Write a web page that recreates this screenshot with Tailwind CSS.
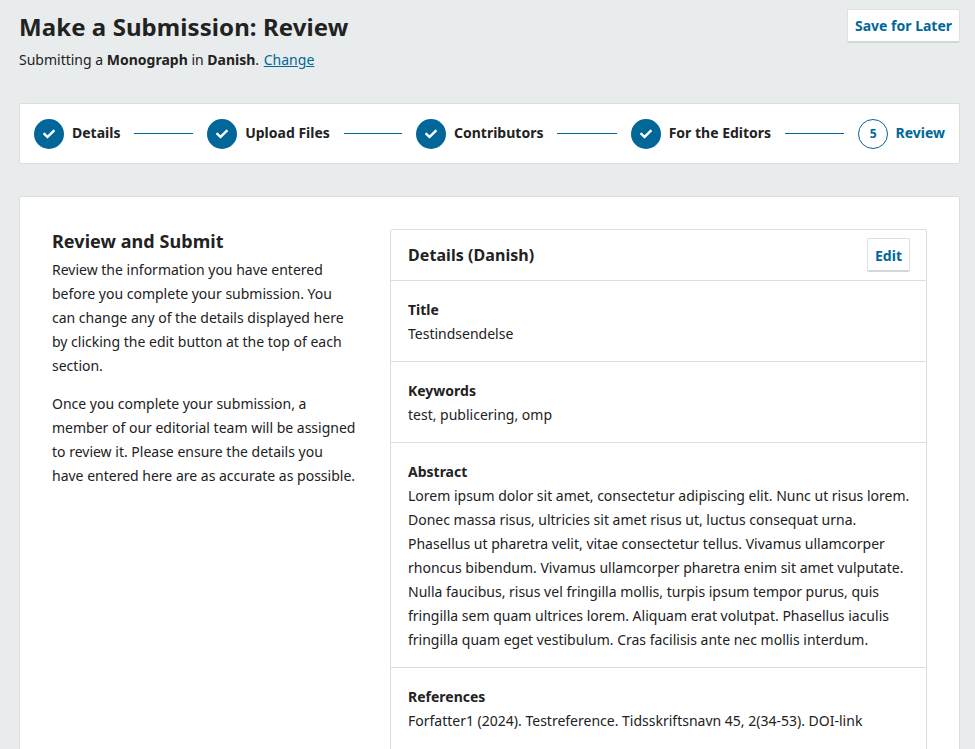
<!DOCTYPE html>
<html lang="en">
<head>
  <meta charset="UTF-8" />
  <title>Make a Submission: Review</title>
  <script src="https://cdn.jsdelivr.net/npm/@tailwindcss/browser@4"></script>
</head>
<body class="h-[749px] overflow-hidden bg-[#e9ecec] font-['Noto_Sans',sans-serif] text-[14px] leading-6 text-[#222]">
  <div class="pl-[19px] pr-[15px]">

    <!-- Header -->
    <header class="flex justify-between items-start h-[103px] pt-[9px]">
      <div>
        <h1 class="text-[24px] leading-9 font-bold tracking-[0.08px]">Make a Submission: Review</h1>
        <p class="mt-[3px]">Submitting a <b class="font-bold">Monograph</b> in <b class="font-bold">Danish</b>. <a href="#" class="ml-px text-[#006798] underline">Change</a></p>
      </div>
      <button class="w-[113px] h-[34px] pt-px bg-white border border-[#e0e0e0] border-b-2 border-b-[#d4d7d7] rounded-[2px] text-[#006798] font-bold">Save for Later</button>
    </header>

    <!-- Steps -->
    <nav class="flex items-center h-[61px] px-[14px] bg-white border border-[#ddd] rounded-[2px] font-bold">
      <span class="w-[30px] h-[30px] rounded-full bg-[#006798] flex items-center justify-center">
        <svg width="12" height="12" viewBox="0 0 512 512" fill="#fff"><path d="M173.898 439.404l-166.4-166.4c-9.997-9.997-9.997-26.206 0-36.204l36.204-36.204c9.997-10 26.207-10 36.204 0L192 312.69 432.095 72.596c9.997-9.997 26.207-9.997 36.204 0l36.204 36.204c9.997 9.997 9.997 26.206 0 36.204l-294.4 294.401c-9.998 9.997-26.207 9.997-36.205-.001z"/></svg>
      </span>
      <span class="ml-2 -mt-0.5">Details</span>
      <span class="w-[58.7px] shrink-0 h-px bg-[#006798] mx-[14px]"></span>
      <span class="w-[30px] h-[30px] rounded-full bg-[#006798] flex items-center justify-center">
        <svg width="12" height="12" viewBox="0 0 512 512" fill="#fff"><path d="M173.898 439.404l-166.4-166.4c-9.997-9.997-9.997-26.206 0-36.204l36.204-36.204c9.997-10 26.207-10 36.204 0L192 312.69 432.095 72.596c9.997-9.997 26.207-9.997 36.204 0l36.204 36.204c9.997 9.997 9.997 26.206 0 36.204l-294.4 294.401c-9.998 9.997-26.207 9.997-36.205-.001z"/></svg>
      </span>
      <span class="ml-2 -mt-0.5">Upload Files</span>
      <span class="w-[58.2px] shrink-0 h-px bg-[#006798] mx-[14px]"></span>
      <span class="w-[30px] h-[30px] rounded-full bg-[#006798] flex items-center justify-center">
        <svg width="12" height="12" viewBox="0 0 512 512" fill="#fff"><path d="M173.898 439.404l-166.4-166.4c-9.997-9.997-9.997-26.206 0-36.204l36.204-36.204c9.997-10 26.207-10 36.204 0L192 312.69 432.095 72.596c9.997-9.997 26.207-9.997 36.204 0l36.204 36.204c9.997 9.997 9.997 26.206 0 36.204l-294.4 294.401c-9.998 9.997-26.207 9.997-36.205-.001z"/></svg>
      </span>
      <span class="ml-2 -mt-0.5">Contributors</span>
      <span class="w-[59.2px] shrink-0 h-px bg-[#006798] mx-[14px]"></span>
      <span class="w-[30px] h-[30px] rounded-full bg-[#006798] flex items-center justify-center">
        <svg width="12" height="12" viewBox="0 0 512 512" fill="#fff"><path d="M173.898 439.404l-166.4-166.4c-9.997-9.997-9.997-26.206 0-36.204l36.204-36.204c9.997-10 26.207-10 36.204 0L192 312.69 432.095 72.596c9.997-9.997 26.207-9.997 36.204 0l36.204 36.204c9.997 9.997 9.997 26.206 0 36.204l-294.4 294.401c-9.998 9.997-26.207 9.997-36.205-.001z"/></svg>
      </span>
      <span class="ml-2 -mt-0.5">For the Editors</span>
      <span class="flex-1 h-px bg-[#006798] mx-[14px]"></span>
      <span class="w-[30px] h-[30px] rounded-full border border-[#006798] text-[#006798] text-[12px] flex items-center justify-center">5</span>
      <span class="ml-[7.4px] -mt-0.5 text-[#006798]">Review</span>
    </nav>

    <!-- Main -->
    <main class="mt-8 bg-white border border-[#ddd] rounded-[2px] p-8 flex gap-[34px] h-[700px]">
      <div class="w-[304px] shrink-0">
        <h2 class="text-[18px] leading-6 font-bold tracking-[0.06px] mb-[5px]">Review and Submit</h2>
        <p>Review the information you have entered before you complete your submission. You can change any of the details displayed here by clicking the edit button at the top of each section.</p>
        <p class="mt-[14px]">Once you complete your submission, a member of our editorial team will be assigned to review it. Please ensure the details you have entered here are as accurate as possible.</p>
      </div>

      <div class="flex-1 border border-[#ddd] rounded-[2px]">
        <div class="flex items-center justify-between h-[51px] pl-[17px] pr-4 border-b border-[#ddd]">
          <h3 class="text-[16px] font-bold tracking-[0.06px]">Details (Danish)</h3>
          <button class="w-[43px] h-[34px] pt-0.5 bg-white border border-[#e0e0e0] border-b-2 border-b-[#d4d7d7] rounded-[2px] text-[#006798] font-bold">Edit</button>
        </div>
        <div class="pl-[17px] pr-4 pt-[17px] pb-[15px] border-b border-[#ddd]">
          <div class="font-bold">Title</div>
          <div>Testindsendelse</div>
        </div>
        <div class="pl-[17px] pr-4 pt-[17px] pb-[15px] border-b border-[#ddd]">
          <div class="font-bold">Keywords</div>
          <div>test, publicering, omp</div>
        </div>
        <div class="pl-[17px] pr-4 pt-[17px] pb-[15px] border-b border-[#ddd]">
          <div class="font-bold">Abstract</div>
          <div>Lorem ipsum dolor sit amet, consectetur adipiscing elit. Nunc ut risus lorem. Donec massa risus, ultricies sit amet risus ut, luctus consequat urna. Phasellus ut pharetra velit, vitae consectetur tellus. Vivamus ullamcorper rhoncus bibendum. Vivamus ullamcorper pharetra enim sit amet vulputate. Nulla faucibus, risus vel fringilla mollis, turpis ipsum tempor purus, quis fringilla sem quam ultrices lorem. Aliquam erat volutpat. Phasellus iaculis fringilla quam eget vestibulum. Cras facilisis ante nec mollis interdum.</div>
        </div>
        <div class="pl-[17px] pr-4 pt-[17px] pb-[15px]">
          <div class="font-bold">References</div>
          <div>Forfatter1 (2024). Testreference. Tidsskriftsnavn 45, 2(34-53). DOI-link</div>
        </div>
      </div>
    </main>
  </div>
</body>
</html>
